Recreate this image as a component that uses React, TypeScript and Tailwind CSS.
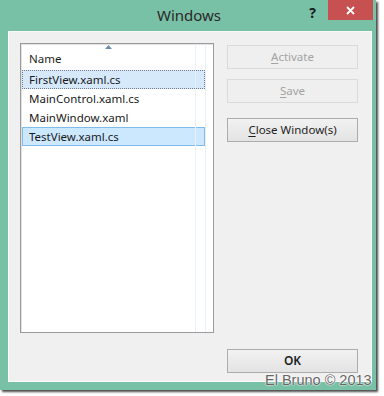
import React from 'react';

const files = ['FirstView.xaml.cs', 'MainControl.xaml.cs', 'MainWindow.xaml', 'TestView.xaml.cs'];

function Btn({ label, hot, disabled, bold }: { label: string; hot: number; disabled?: boolean; bold?: boolean }) {
  return (
    <div
      className={`h-[24px] w-[131px] flex items-center justify-center text-[11.5px] border ${
        disabled
          ? 'border-[#dadada] bg-[#efefef] text-[#a3a3a3]'
          : 'border-[#acacac] bg-gradient-to-b from-[#f2f2f2] to-[#e3e3e3] text-[#1e1e1e]'
      } ${bold ? 'font-semibold' : ''}`}
    >
      <span>
        {label.slice(0, hot)}
        <span className="underline underline-offset-2">{label[hot]}</span>
        {label.slice(hot + 1)}
      </span>
    </div>
  );
}

export default function App() {
  return (
    <div className="w-[384px] h-[396px] bg-white font-['Noto_Sans',sans-serif] relative overflow-hidden">
      {/* window frame */}
      <div className="w-[376px] h-[390px] bg-[#78c0a6] flex flex-col shadow-[2px_2px_2px_rgba(0,0,0,0.7)]">
        {/* title bar */}
        <div className="h-[31px] flex items-start relative">
          <div className="flex-1 h-[31px] flex items-center justify-center text-[15px] text-[#2a2a2a] pl-[2px]">Windows</div>
          <div className="absolute right-[60px] top-[2px] text-[14px] font-bold text-[#1a1a1a]">?</div>
          <div className="absolute right-[3px] top-0 w-[45px] h-[20px] bg-[#c75050] flex items-center justify-center">
            <svg width="9" height="9" viewBox="0 0 9 9">
              <path d="M1 1L8 8M8 1L1 8" stroke="#fff" strokeWidth="1.8" />
            </svg>
          </div>
        </div>

        {/* client area */}
        <div className="ml-[8px] w-[364px] h-[351px] bg-[#f0f0f0] border border-[#fafafa] flex flex-col">
          <div className="flex pt-[11px] pl-[11px] gap-[13px]">
            {/* list view */}
            <div className="w-[194px] h-[290px] bg-white border border-[#9a9a9a] shadow-[inset_1px_1px_0_#e3e3e3] relative">
              <div className="absolute left-[174px] top-0 bottom-0 w-px bg-[#e8f1fb]" />
              <div className="absolute left-[184px] top-0 bottom-0 w-px bg-[#e8f1fb]" />
              <div className="h-[26px] relative flex items-center pl-[8px] pt-[3px] text-[11.5px] text-[#1e1e1e]">
                Name
                <svg className="absolute left-[84px] top-[1px]" width="7" height="4" viewBox="0 0 7 4">
                  <path d="M0 4L3.5 0L7 4Z" fill="#6a8fb5" />
                </svg>
              </div>
              <div className="flex flex-col pl-[1px] w-[184px]">
                {files.map((f, i) => (
                  <div
                    key={f}
                    className={`h-[19px] flex items-center pl-[6px] text-[11.5px] text-[#1a1a1a] border ${
                      i === 0
                        ? 'border-dotted border-[#6f7d8a] bg-[#d5e9fa]'
                        : i === 3
                        ? 'border-[#7fbcec] bg-[#cce8ff]'
                        : 'border-transparent'
                    }`}
                  >
                    {f}
                  </div>
                ))}
              </div>
            </div>

            {/* buttons */}
            <div className="flex flex-col pt-[2px]">
              <Btn label="Activate" hot={0} disabled />
              <div className="h-[10px]" />
              <Btn label="Save" hot={0} disabled />
              <div className="h-[15px]" />
              <Btn label="Close Window(s)" hot={0} />
            </div>
          </div>

          <div className="flex-1" />
          <div className="flex justify-end pr-[13px] pb-[8px]">
            <div className="h-[24px] w-[131px] flex items-center justify-center text-[12px] font-semibold border border-[#acacac] bg-gradient-to-b from-[#f2f2f2] to-[#e3e3e3] text-[#1e1e1e]">
              OK
            </div>
          </div>
        </div>
      </div>

      {/* watermark */}
      <div className="absolute left-[265px] top-[370px] text-[14.5px] text-[#666] font-['Liberation_Sans',sans-serif] [text-shadow:0_0_1px_#fff,0_0_1px_#fff,0_0_2px_#fff] whitespace-nowrap">
        El Bruno © 2013
      </div>
    </div>
  );
}
